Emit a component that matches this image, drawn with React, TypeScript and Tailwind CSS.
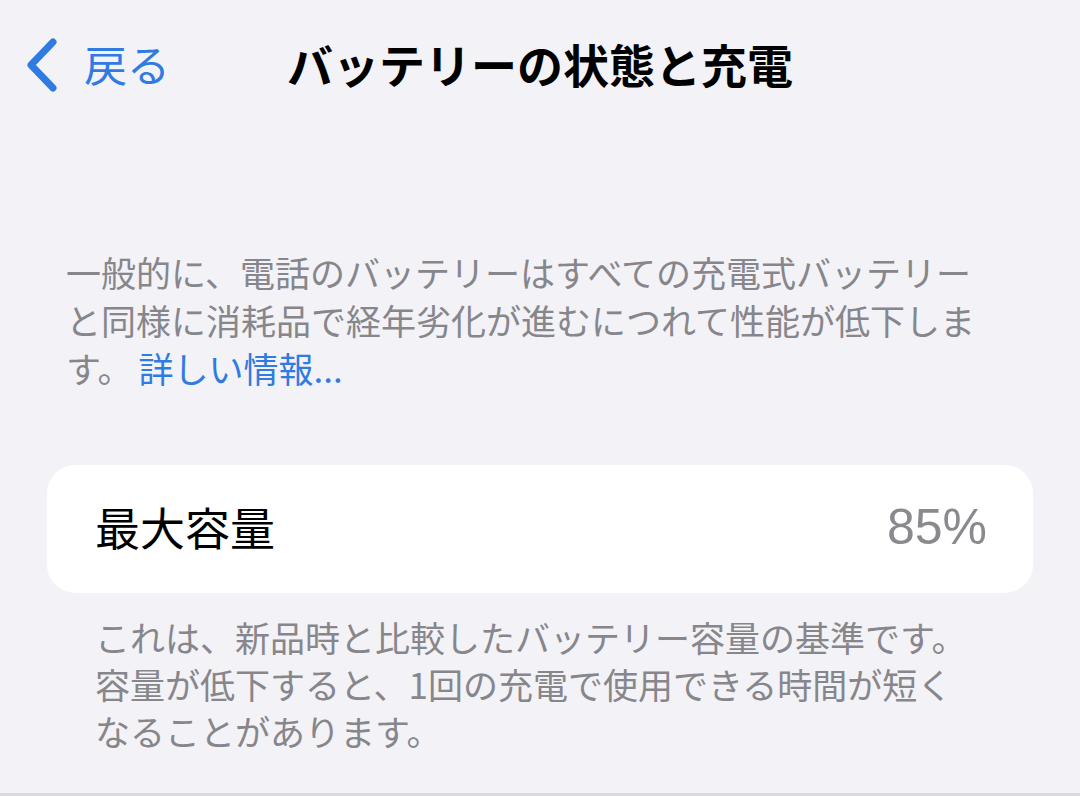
import { ChevronLeft } from 'lucide-react'

const font = { fontFamily: '"Noto Sans CJK JP", "Noto Sans", sans-serif' }

const intro = [
  '一般的に、電話のバッテリーはすべての充電式バッテリー',
  'と同様に消耗品で経年劣化が進むにつれて性能が低下しま',
]

const footer = [
  'これは、新品時と比較したバッテリー容量の基準です。',
  '容量が低下すると、1回の充電で使用できる時間が短く',
  'なることがあります。',
]

export default function App() {
  return (
    <div
      className="w-[1080px] h-[796px] overflow-hidden bg-[#f2f2f7] border-b-[3px] border-[#d9d9de] flex flex-col"
      style={font}
    >
      {/* Nav bar */}
      <div className="relative h-[130px] flex items-center justify-center">
        <div className="absolute left-[18px] top-[38px] flex items-center gap-[20px] text-[#2f7be2]">
          <svg width="46" height="54" viewBox="0 0 46 54" fill="none">
            <path
              d="M35 4 L13 27 L35 50"
              stroke="#2f7be2"
              strokeWidth="7"
              strokeLinecap="round"
              strokeLinejoin="round"
            />
          </svg>
          <span className="text-[43px] leading-none -mt-[4px]">戻る</span>
        </div>
        <h1 className="text-[46px] font-bold leading-none text-black -mt-[4px]">
          バッテリーの状態と充電
        </h1>
      </div>

      {/* Intro */}
      <div className="mt-[118px] pl-[66px] text-[35px] leading-[48px] text-[#86868b]">
        {intro.map((line, i) => (
          <div key={i} className="whitespace-nowrap">{line}</div>
        ))}
        <div className="whitespace-nowrap">
          す。<span className="ml-[6px] text-[#2f7be2]">詳しい情報...</span>
        </div>
      </div>

      {/* Card */}
      <div className="mt-[73px] mx-[47px] h-[128px] rounded-[28px] bg-white flex items-center justify-between pl-[48px] pr-[46px]">
        <span className="text-[45px] text-black leading-none -mt-[6px]">最大容量</span>
        <span
          className="text-[50px] text-[#8a8a8e] leading-none -mt-[4px]"
          style={{ fontFamily: '"Liberation Sans", Arial, sans-serif' }}
        >
          85%
        </span>
      </div>

      {/* Footer */}
      <div className="mt-[20px] pl-[95px] text-[35px] leading-[47px] text-[#86868b]">
        {footer.map((line, i) => (
          <div key={i} className="whitespace-nowrap">{line}</div>
        ))}
      </div>
    </div>
  )
}
